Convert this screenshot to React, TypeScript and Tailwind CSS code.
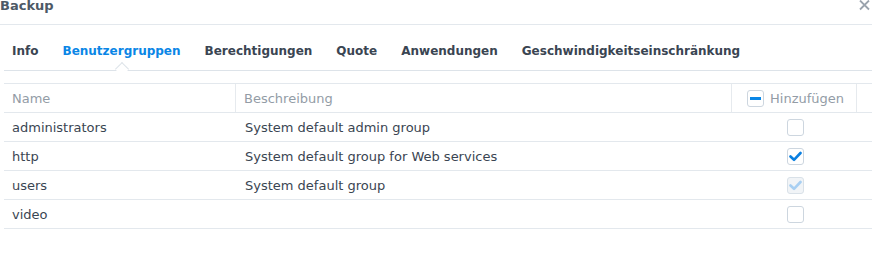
import { useState } from 'react';

type Group = {
  name: string;
  description: string;
  state: 'off' | 'on' | 'locked';
};

const groups: Group[] = [
  { name: 'administrators', description: 'System default admin group', state: 'off' },
  { name: 'http', description: 'System default group for Web services', state: 'on' },
  { name: 'users', description: 'System default group', state: 'locked' },
  { name: 'video', description: '', state: 'off' },
];

const tabs = ['Info', 'Benutzergruppen', 'Berechtigungen', 'Quote', 'Anwendungen', 'Geschwindigkeitseinschränkung'];

function Check({ state }: { state: Group['state'] | 'partial' }) {
  const locked = state === 'locked';
  return (
    <span
      className={`flex h-[17px] w-[17px] items-center justify-center rounded-[3px] border ${
        locked ? 'border-[#d9e1e8] bg-[#f1f4f7]' : 'border-[#cdd6df] bg-white'
      }`}
    >
      {(state === 'on' || locked) && (
        <svg width="13" height="11" viewBox="0 0 13 11" fill="none">
          <path
            d="M1.5 5.5 L5 8.8 L11.5 2"
            stroke={locked ? '#a8cff2' : '#0a7fe0'}
            strokeWidth="2.6"
            strokeLinecap="round"
            strokeLinejoin="round"
          />
        </svg>
      )}
      {state === 'partial' && <span className="h-[3px] w-[11px] bg-[#0a86e6]" />}
    </span>
  );
}

export default function App() {
  const [active] = useState(1);

  return (
    <div className="h-[269px] w-[872px] overflow-hidden bg-white font-['DejaVu_Sans',sans-serif] text-[13px] text-[#3a4552]">
      <div className="flex h-[25px] items-start justify-between border-b border-[#e3e8ed] pr-[1px]">
        <span className="-mt-[4px] text-[13px] font-bold text-[#4d5966]">Backup</span>
        <svg width="11" height="11" viewBox="0 0 11 11" className="mr-[1px]">
          <path d="M1 0.5 L10 9.5 M10 0.5 L1 9.5" stroke="#9aa3ad" strokeWidth="1.8" />
        </svg>
      </div>

      <div className="relative ml-[4px] flex h-[46px] items-center gap-[24px] border-b border-[#dde3e9] pl-[8px] pt-[6px] text-[12px]">
        {tabs.map((t, i) => (
          <div key={t} className={`relative font-bold ${i === active ? 'text-[#0a86e6]' : 'text-[#3a4552]'}`}>
            {t}
            {i === active && (
              <span className="absolute left-1/2 top-[22px] h-[10px] w-[10px] -translate-x-1/2 rotate-45 border-l border-t border-[#dde3e9] bg-white" />
            )}
          </div>
        ))}
      </div>

      <div className="ml-[4px] mt-[12px] border-t border-[#e3e8ed]">
        <div className="flex h-[29px] items-center border-b border-[#e3e8ed] text-[#939ca6]">
          <div className="flex h-full w-[232px] items-center border-r border-[#e6eaee] pl-[8px] pt-[1px]">Name</div>
          <div className="flex h-full w-[496px] items-center border-r border-[#e6eaee] pl-[8px] pt-[1px]">Beschreibung</div>
          <div className="flex h-full w-[125px] items-center gap-[6px] border-r border-[#e6eaee] pl-[15px]">
            <Check state="partial" />
            <span className="pt-[1px]">Hinzufügen</span>
          </div>
        </div>
        {groups.map((g) => (
          <div key={g.name} className="flex h-[29px] items-center border-b border-[#e3e8ed]">
            <div className="w-[233px] pl-[8px] pt-[1px]">{g.name}</div>
            <div className="w-[496px] pl-[8px] pt-[1px]">{g.description}</div>
            <div className="flex w-[125px] justify-center">
              <Check state={g.state} />
            </div>
          </div>
        ))}
      </div>
    </div>
  );
}
